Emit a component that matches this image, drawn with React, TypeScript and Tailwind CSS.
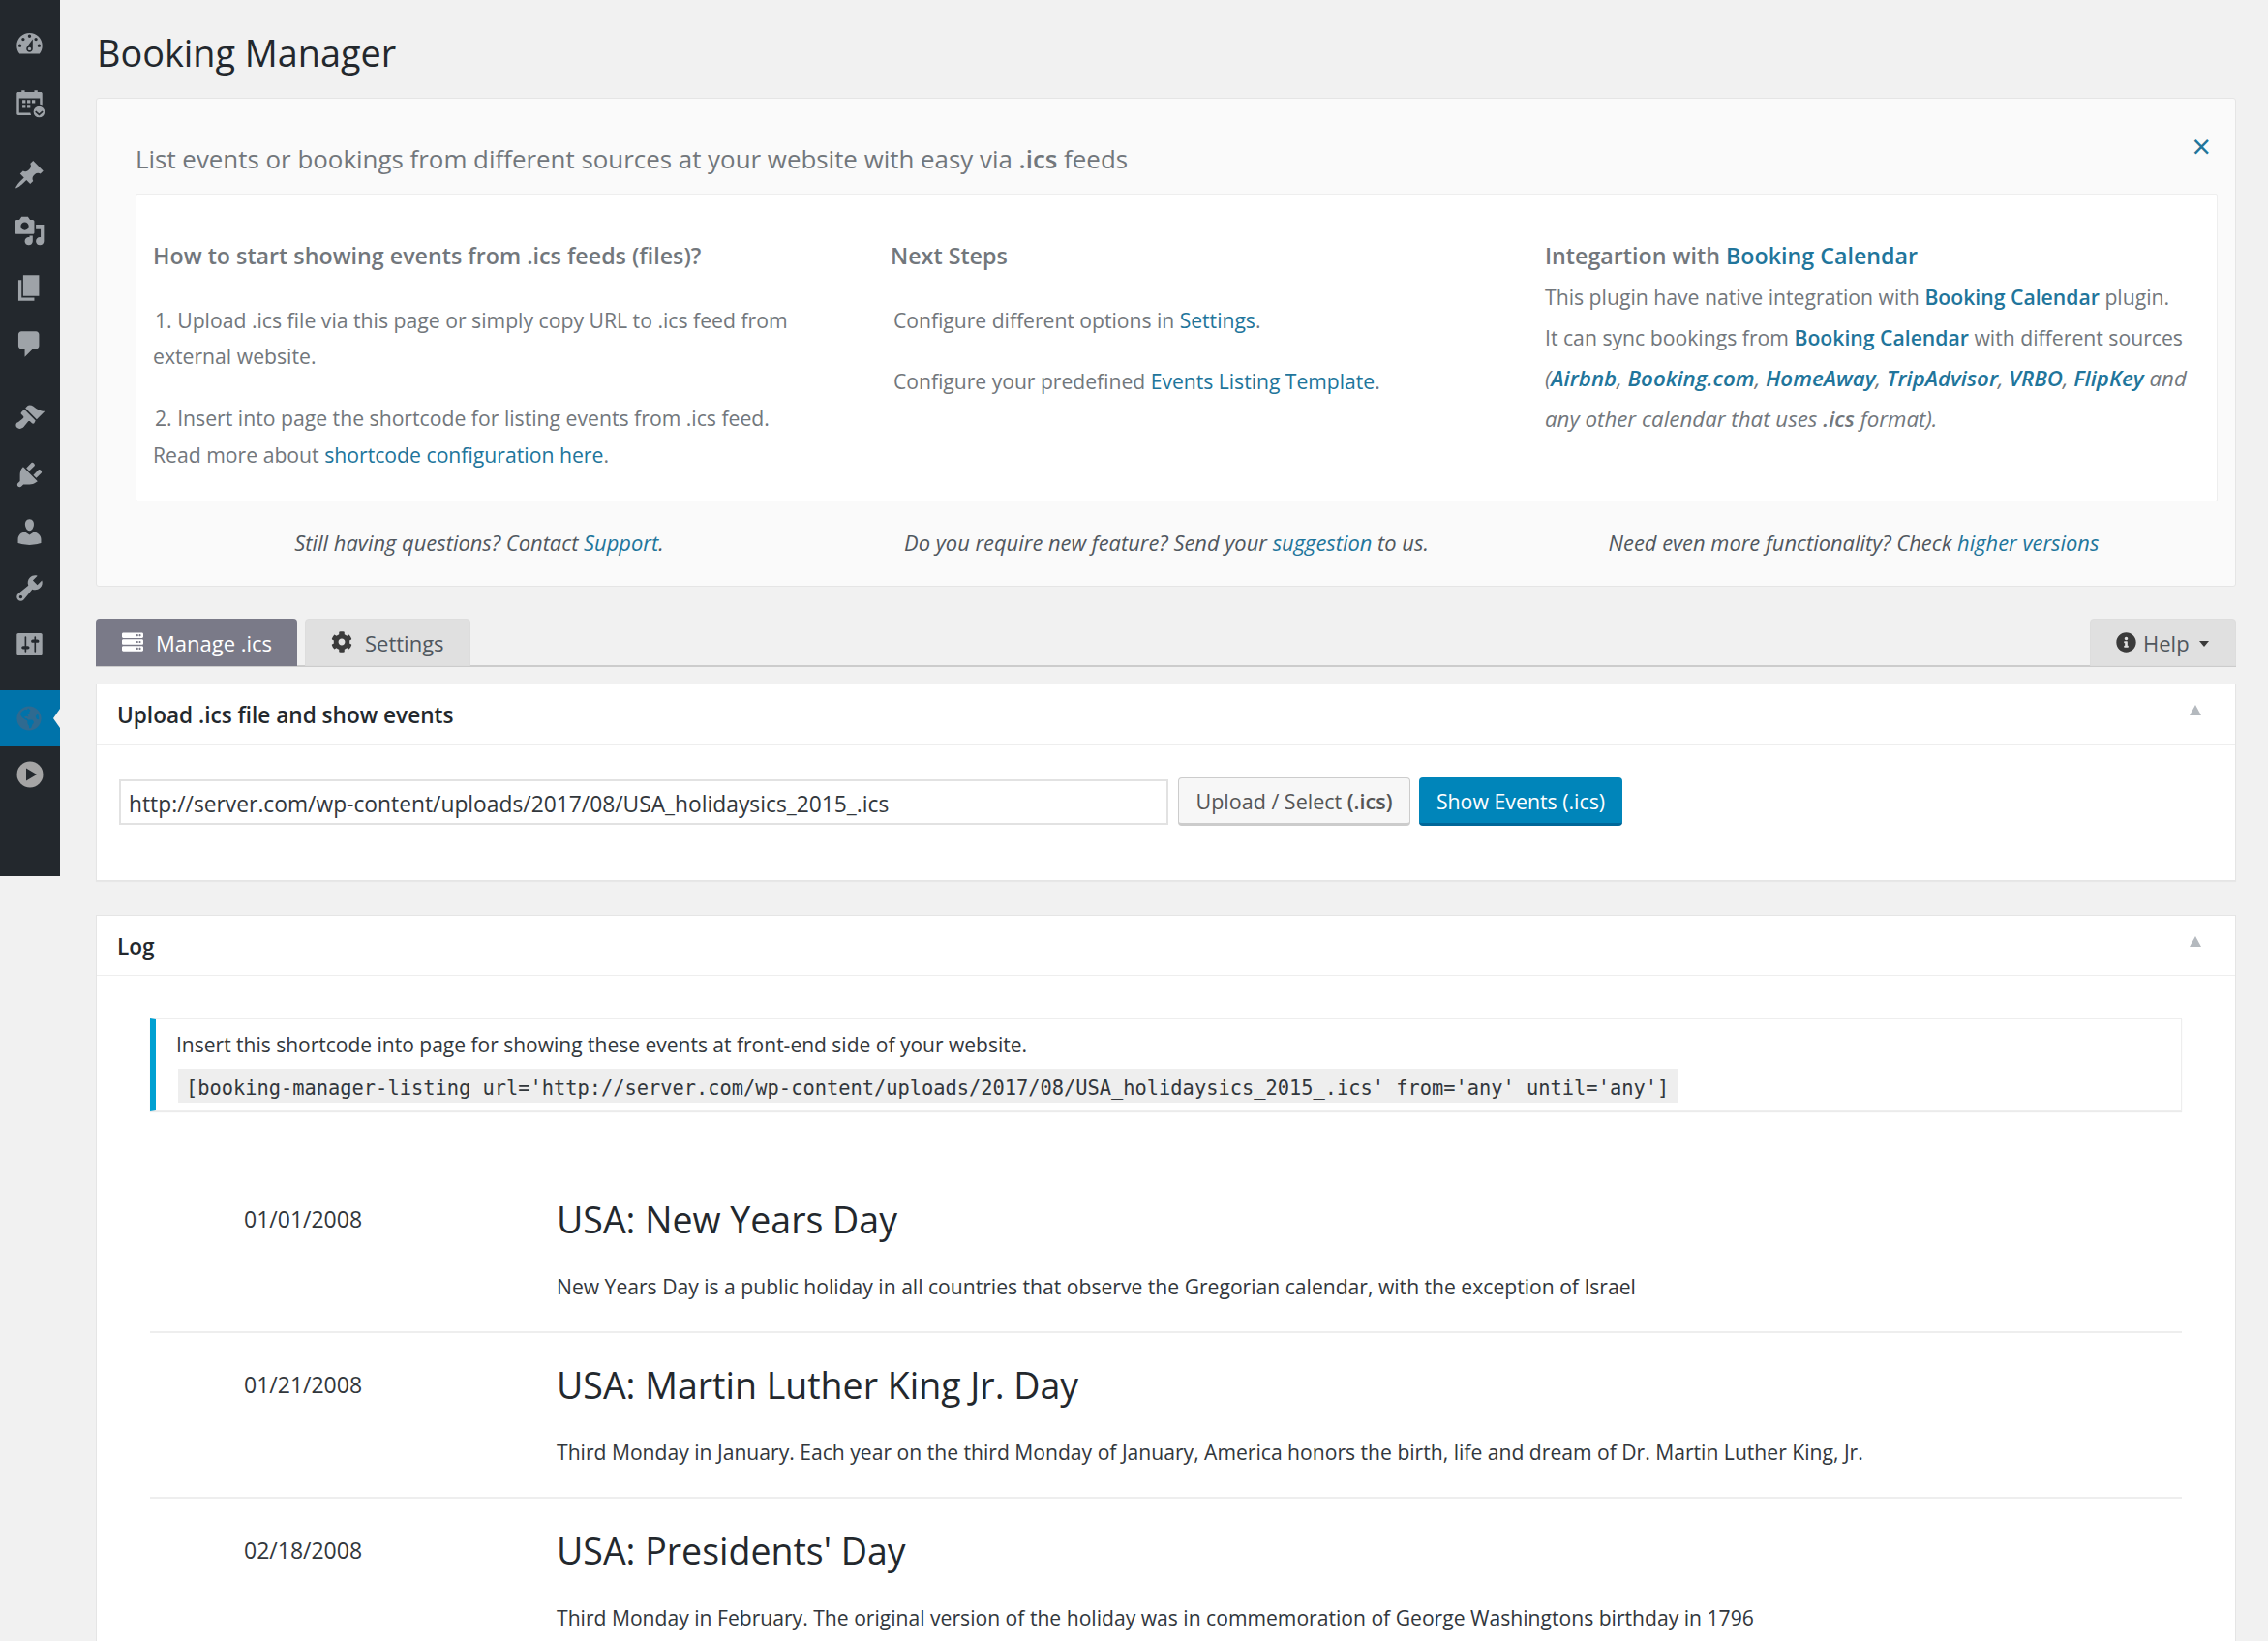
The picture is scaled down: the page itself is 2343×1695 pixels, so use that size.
import React from 'react';
import { FaServer, FaCog, FaInfoCircle, FaGlobeAmericas } from 'react-icons/fa';

const menuIcons = [
  { mt: 'mt-[16px]', d: 'M3.76 16h12.48c1.1-1.37 1.76-3.11 1.76-5 0-4.42-3.58-8-8-8s-8 3.58-8 8c0 1.89.66 3.63 1.76 5zM10 4c.55 0 1 .45 1 1s-.45 1-1 1-1-.45-1-1 .45-1 1-1zM6 6c.55 0 1 .45 1 1s-.45 1-1 1-1-.45-1-1 .45-1 1-1zm8 0c.55 0 1 .45 1 1s-.45 1-1 1-1-.45-1-1 .45-1 1-1zm-5.37 5.55L12 7v6c0 1.1-.9 2-2 2s-2-.9-2-2c0-.57.24-1.08.63-1.45zM4 10c.55 0 1 .45 1 1s-.45 1-1 1-1-.45-1-1 .45-1 1-1zm12 0c.55 0 1 .45 1 1s-.45 1-1 1-1-.45-1-1 .45-1 1-1zm-5 3c0-.55-.45-1-1-1s-1 .45-1 1 .45 1 1 1 1-.45 1-1z' },
  { mt: 'mt-[3px]', d: 'M3 3h2V2h2v1h6V2h2v1h2c.6 0 1 .4 1 1v7.2a5 5 0 0 0-1.5-.5V7H3.5v9h7a5 5 0 0 0 .5 1.5H3c-.6 0-1-.4-1-1V4c0-.6.4-1 1-1zm2.500 5h2v2h-2V8zm3 0h2v2h-2V8zm3 0h2v2h-2V8zm-6 3h2v2h-2v-2zm3 0h2v2h-2v-2zM16 12a3.500 3.500 0 1 1 0 7 3.500 3.500 0 0 1 0-7zm-1.900 2.900-.7.7 2.600 2.300 2.600-2.300-.7-.7-1.900 1.600-1.900-1.600z' },
  { mt: 'mt-[16px]', d: 'M10.44 3.02l1.82-1.82 6.36 6.35-1.83 1.82c-1.05-.68-2.48-.57-3.41.36l-.75.75c-.92.93-1.04 2.35-.35 3.41l-1.83 1.82-2.41-2.41-2.8 2.79c-.42.42-3.38 2.71-3.8 2.29s1.86-3.39 2.28-3.81l2.79-2.79L4.1 9.36l1.83-1.82c1.05.69 2.48.57 3.41-.36l.75-.75c.93-.92 1.04-2.35.35-3.41z' },
  { mt: 'mt-0', d: 'M13 11V4c0-.55-.45-1-1-1h-1.67L9 1H5L3.67 3H2c-.55 0-1 .45-1 1v7c0 .55.45 1 1 1h10c.55 0 1-.45 1-1zM7 4.500c1.380 0 2.500 1.120 2.500 2.500S8.380 9.500 7 9.500 4.500 8.380 4.500 7 5.620 4.500 7 4.500zM14 6h5v10.500c0 1.380-1.120 2.500-2.500 2.500S14 17.880 14 16.500s1.120-2.500 2.500-2.500c.17 0 .34.02.5.05V9h-3V6zm-4 8.050V13h2v3.500c0 1.380-1.120 2.500-2.500 2.500S7 17.880 7 16.500 8.120 14 9.500 14c.17 0 .34.02.5.05z' },
  { mt: 'mt-[1px]', d: 'M6 15V2h10v13H6zm-1 1h8v2H3V5h2v11z' },
  { mt: 'mt-0', d: 'M5 2h9c1.100 0 2 .9 2 2v7c0 1.100-.9 2-2 2h-2l-5 5v-5H5c-1.100 0-2-.9-2-2V4c0-1.100.9-2 2-2z' },
  { mt: 'mt-[18px]', d: 'M14.480 11.060L7.410 3.990l1.500-1.500c.5-.56 2.300-.47 3.510.32 1.210.8 1.430 1.280 2.910 2.100 1.180.64 2.450 1.260 4.450.85zm-.71.71L6.700 4.700 4.930 6.470c-.39.39-.39 1.020 0 1.410l1.060 1.060c.39.39.39 1.030 0 1.420-.6.6-1.430 1.110-2.210 1.690-.35.26-.7.53-1.010.84C1.430 13.230.99 15.040 2.180 16.220c1.190 1.190 2.990.75 4.340-.6.3-.3.58-.65.84-1 .58-.79 1.090-1.610 1.690-2.210.39-.39 1.020-.39 1.410 0l1.060 1.060c.39.39 1.020.39 1.410 0z' },
  { mt: 'mt-[1px]', d: 'M13.110 4.360L9.870 7.600 8 5.730l3.240-3.240c.35-.34 1.050-.2 1.560.32.52.51.66 1.210.31 1.550zm-8 1.770l.91-1.120 9.010 9.010-1.190.84c-.71.71-2.630 1.160-3.820 1.160H6.140L4.900 17.260c-.59.59-1.540.59-2.120 0-.59-.58-.59-1.530 0-2.120l1.240-1.240v-3.880c0-1.130.4-3.190 1.090-3.890zm7.260 3.970l3.240-3.240c.34-.35 1.040-.21 1.550.31.52.51.66 1.210.31 1.550l-3.240 3.250z' },
  { mt: 'mt-[1px]', d: 'M10 9.250c-2.270 0-2.730-3.440-2.730-3.440C7 4.020 7.820 2 9.970 2c2.160 0 2.980 2.020 2.710 3.810 0 0-.41 3.440-2.680 3.440zm0 2.570L12.720 10c2.390 0 4.520 2.330 4.520 4.530v2.490s-3.650 1.130-7.240 1.130c-3.650 0-7.240-1.130-7.240-1.130v-2.490c0-2.250 1.940-4.480 4.470-4.480z' },
  { mt: 'mt-0', d: 'M16.680 9.770c-1.340 1.340-3.300 1.670-4.950.99l-5.410 6.520c-.99.99-2.590.99-3.580 0s-.99-2.590 0-3.570l6.520-5.420c-.68-1.650-.35-3.610.99-4.950 1.280-1.280 3.120-1.620 4.720-1.060l-2.890 2.890 2.820 2.820 2.860-2.870c.53 1.580.18 3.390-1.080 4.650zM3.810 16.210c.4.39 1.040.39 1.430 0 .4-.4.4-1.040 0-1.430-.39-.4-1.030-.4-1.430 0-.39.39-.39 1.030 0 1.430z' },
  { mt: 'mt-0', d: 'M18 16V4c0-.55-.45-1-1-1H3c-.55 0-1 .45-1 1v12c0 .55.45 1 1 1h14c.55 0 1-.45 1-1zM8 11h1c.55 0 1 .45 1 1s-.45 1-1 1H8v1.500c0 .28-.22.5-.5.5s-.5-.22-.5-.5V13H6c-.55 0-1-.45-1-1s.45-1 1-1h1V5.500c0-.28.22-.5.5-.5s.5.22.5.5V11zm5-2h-1c-.55 0-1-.45-1-1s.45-1 1-1h1V5.500c0-.28.22-.5.5-.5s.5.22.5.5V7h1c.55 0 1 .45 1 1s-.45 1-1 1h-1v5.500c0 .28-.22.5-.5.5s-.5-.22-.5-.5V9z' },
];

const events = [
  { date: '01/01/2008', title: 'USA: New Years Day', text: 'New Years Day is a public holiday in all countries that observe the Gregorian calendar, with the exception of Israel' },
  { date: '01/21/2008', title: 'USA: Martin Luther King Jr. Day', text: 'Third Monday in January. Each year on the third Monday of January, America honors the birth, life and dream of Dr. Martin Luther King, Jr.' },
  { date: '02/18/2008', title: "USA: Presidents' Day", text: 'Third Monday in February. The original version of the holiday was in commemoration of George Washingtons birthday in 1796' },
];

function Link({ children, className = '' }: { children: React.ReactNode; className?: string }) {
  return <a className={`text-[#21759b] ${className}`}>{children}</a>;
}

function Sidebar() {
  return (
    <div className="w-[62px] h-[905px] shrink-0 bg-[#23282d]">
      {menuIcons.map((icon, i) => (
        <div key={i} className={`h-[58px] flex items-center justify-center pr-[2px] ${icon.mt}`}>
          <svg viewBox="0 0 20 20" className="w-[33px] h-[33px] fill-[#9ea3a8]">
            <path d={icon.d} />
          </svg>
        </div>
      ))}
      <div className="relative mt-[19px] h-[58px] bg-[#0073aa] flex items-center justify-center pr-[2px]">
        <FaGlobeAmericas className="w-[26px] h-[26px] text-[#2f6a90]" />
        <div className="absolute right-0 top-[19px] border-y-[10px] border-r-[7px] border-y-transparent border-r-[#f1f1f1]" />
      </div>
      <div className="h-[58px] flex items-center justify-center">
        <svg viewBox="0 0 28 28" className="w-[28px] h-[28px]">
          <circle cx="14" cy="14" r="13.500" fill="#a5a5a5" />
          <path d="M10 7.500 21 14 10 20.500z" fill="#23282d" />
        </svg>
      </div>
    </div>
  );
}

function WelcomePanel() {
  return (
    <div className="relative mt-[23px] h-[505px] border border-[#e5e5e5] rounded-[3px] bg-[#fafafa] pl-[40px] pr-[18px]">
      <a className="absolute right-[25px] top-[27px] text-[34px] leading-[44px] text-[#21759b]">×</a>
      <div className="pt-[41px] h-[98px] text-[25.900px] leading-[42px] text-[#72777c]">
        List events or bookings from different sources at your website with easy via <b className="font-semibold">.ics</b> feeds
      </div>
      <div className="h-[318px] bg-white border border-[#eeeeee] rounded-[2px] pt-[45px] pl-[17px] grid grid-cols-[762px_676px_1fr] text-[21.200px] text-[#72777c]">
        <div>
          <div className="text-[23.250px] leading-[36px] font-semibold">How to start showing events from .ics feeds (files)?</div>
          <div className="mt-[30px] leading-[37px] w-[700px] indent-[2px]">1. Upload .ics file via this page or simply copy URL to .ics feed from external website.</div>
          <div className="mt-[27px] leading-[38px] w-[700px] indent-[2px]">
            2. Insert into page the shortcode for listing events from .ics feed.<br />
            Read more about <Link>shortcode configuration here</Link>.
          </div>
        </div>
        <div className="text-[21.100px]">
          <div className="text-[23.250px] leading-[36px] font-semibold">Next Steps</div>
          <div className="mt-[30px] leading-[37px] ml-[3px]">Configure different options in <Link>Settings</Link>.</div>
          <div className="mt-[26px] leading-[37px] ml-[3px]">Configure your predefined <Link>Events Listing Template</Link>.</div>
        </div>
        <div>
          <div className="text-[23.250px] leading-[36px] font-semibold">Integartion with <Link>Booking Calendar</Link></div>
          <div className="mt-[4px] leading-[42px]">
            This plugin have native integration with <Link className="font-semibold">Booking Calendar</Link> plugin.<br />
            It can sync bookings from <Link className="font-semibold">Booking Calendar</Link> with different sources<br />
            <i className="text-[22.300px] leading-[42px]">
              (<Link className="font-semibold">Airbnb</Link>, <Link className="font-semibold">Booking.com</Link>, <Link className="font-semibold">HomeAway</Link>, <Link className="font-semibold">TripAdvisor</Link>, <Link className="font-semibold">VRBO</Link>, <Link className="font-semibold">FlipKey</Link> and<br />
              any other calendar that uses <b className="font-semibold">.ics</b> format).
            </i>
          </div>
        </div>
      </div>
      <div className="grid grid-cols-3 pt-[27px] text-[21.900px] leading-[32px] italic text-[#50575e] text-center w-[2130px]">
        <div>Still having questions? Contact <Link>Support</Link>.</div>
        <div>Do you require new feature? Send your <Link>suggestion</Link> to us.</div>
        <div>Need even more functionality? Check <Link>higher versions</Link></div>
      </div>
    </div>
  );
}

function Tabs() {
  return (
    <div className="mt-[33px] h-[50px] flex border-b-2 border-[#cccccc] text-[22px]">
      <div className="w-[208px] h-[49px] pt-[2px] rounded-t-[4px] bg-[#7a7a88] text-white flex items-center pl-[27px] gap-[13px]">
        <FaServer className="w-[22px] h-[22px] -mt-[3px]" /> Manage .ics
      </div>
      <div className="ml-[8px] w-[171px] h-[49px] pt-[2px] rounded-t-[4px] bg-[#e0e0e0] border border-[#dddddd] text-[#50575e] flex items-center pl-[26px] gap-[13px]">
        <FaCog className="w-[22px] h-[22px] -mt-[3px] text-[#3a3a3a]" /> Settings
      </div>
      <div className="ml-auto w-[151px] h-[49px] pt-[2px] rounded-t-[4px] bg-[#e0e0e0] border border-[#dddddd] text-[#50575e] flex items-center pl-[26px] gap-[7px]">
        <FaInfoCircle className="w-[21px] h-[21px] -mt-[3px] text-[#3a3a3a]" /> Help
        <span className="ml-[3px] border-x-[5px] border-t-[6px] border-x-transparent border-t-[#3a3a3a]" />
      </div>
    </div>
  );
}

function PanelHeader({ title }: { title: string }) {
  return (
    <div className="relative h-[62px] border-b border-[#eeeeee] pl-[21px] pt-[2px] flex items-center text-[22.600px] font-semibold text-[#23282d]">
      {title}
      <span className="absolute right-[35px] top-[21px] border-x-[6px] border-b-[11px] border-x-transparent border-b-[#b4b9be]" />
    </div>
  );
}

function UploadPanel() {
  return (
    <div className="mt-[17px] h-[204px] bg-white border border-[#e5e5e5] shadow-[0_1px_1px_rgba(0,0,0,0.04)]">
      <PanelHeader title="Upload .ics file and show events" />
      <div className="flex items-start gap-[10px] pl-[23px] pt-[34px]">
        <div className="mt-[2px] w-[1084px] h-[47px] border-2 border-[#e2e2e2] flex items-center pl-[8px] pt-[6px] text-[22.800px] text-[#32373c]">
          http://server.com/wp-content/uploads/2017/08/USA_holidaysics_2015_.ics
        </div>
        <div className="w-[240px] h-[50px] pt-[2px] rounded-[4px] border border-[#cccccc] border-b-[3px] bg-[#f7f7f7] text-[#555555] text-[21.500px] flex items-center justify-center">
          Upload / Select&nbsp;<span className="font-semibold">(.ics)</span>
        </div>
        <div className="-ml-[1px] w-[210px] h-[50px] pt-[2px] rounded-[4px] border-b-[3px] border-[#006799] bg-[#0085ba] text-white text-[21.300px] flex items-center justify-center">
          Show Events (.ics)
        </div>
      </div>
    </div>
  );
}

function LogPanel() {
  return (
    <div className="mt-[35px] h-[800px] bg-white border border-[#e5e5e5]">
      <PanelHeader title="Log" />
      <div className="mt-[44px] ml-[55px] mr-[55px] h-[96px] border border-[#eeeeee] border-l-[6px] border-l-[#00a0d2] shadow-[0_1px_1px_rgba(0,0,0,0.08)] pl-[21px] text-[21px] text-[#32373c]">
        <div className="pt-[10px] leading-[32px]">Insert this shortcode into page for showing these events at front-end side of your website.</div>
        <code className="mt-[9px] ml-[2px] inline-block h-[35px] bg-[#eeeeee] pl-[8px] pr-[9px] text-[20.360px] leading-[40px] font-['DejaVu_Sans_Mono',monospace]">
          [booking-manager-listing url='http://server.com/wp-content/uploads/2017/08/USA_holidaysics_2015_.ics' from='any' until='any']
        </code>
      </div>
      <div className="mt-[58px] mx-[55px]">
        {events.map((ev, i) => (
          <div key={i} className="h-[171px] border-b-2 border-[#eeeeee] grid grid-cols-[97px_323px_1fr]">
            <div />
            <div className="pt-[33px] text-[23px] leading-[40px] text-[#32373c]">{ev.date}</div>
            <div className="pt-[23px]">
              <div className="text-[37.500px] leading-[62px] text-[#23282d]">{ev.title}</div>
              <div className="mt-[22px] text-[21.120px] leading-[32px] text-[#32373c]">{ev.text}</div>
            </div>
          </div>
        ))}
      </div>
    </div>
  );
}

export default function App() {
  return (
    <div className="flex h-[1695px] overflow-hidden bg-[#f1f1f1] font-['Open_Sans','Noto_Sans',sans-serif]">
      <Sidebar />
      <div className="flex-1 pl-[37px] pr-[33px] min-w-0">
        <h1 className="pt-[32px] pl-[1px] text-[37.800px] leading-[46px] text-[#23282d]">Booking Manager</h1>
        <WelcomePanel />
        <Tabs />
        <UploadPanel />
        <LogPanel />
      </div>
    </div>
  );
}
